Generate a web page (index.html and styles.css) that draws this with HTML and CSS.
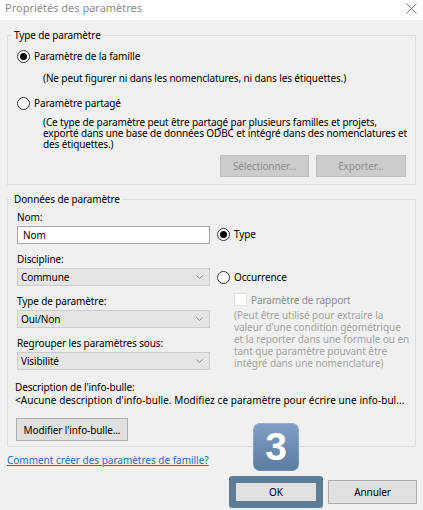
FILE: index.html
```html
<!DOCTYPE html>
<html lang="fr">
<head>
<meta charset="utf-8">
<title>Propriétés des paramètres</title>
<link rel="stylesheet" href="styles.css">
</head>
<body>
<div class="titlebar">
  <span class="title">Propriétés des paramètres</span>
  <svg class="close" width="11" height="11" viewBox="0 0 11 11"><path d="M0.5 0.5 L10.5 10.5 M10.5 0.5 L0.5 10.5" stroke="#7a7a7a" stroke-width="1" fill="none"/></svg>
</div>
<div class="content">
  <fieldset class="group g1">
    <legend>Type de paramètre</legend>
    <div class="radio-row r1"><span class="radio checked"></span><span>Paramètre de la famille</span></div>
    <p class="note n1">(Ne peut figurer ni dans les nomenclatures, ni dans les étiquettes.)</p>
    <div class="radio-row r2"><span class="radio"></span><span>Paramètre partagé</span></div>
    <p class="note n2">(Ce type de paramètre peut être partagé par plusieurs familles et projets,<br>exporté dans une base de données ODBC et intégré dans des nomenclatures et<br>des étiquettes.)</p>
    <div class="btn-row">
      <button class="btn disabled sel">Sélectionner...</button>
      <button class="btn disabled exp">Exporter...</button>
    </div>
  </fieldset>

  <fieldset class="group g2">
    <legend>Données de paramètre</legend>
    <div class="cols">
      <div class="left">
        <div class="lbl first">Nom:</div>
        <div class="input">Nom</div>
        <div class="lbl">Discipline:</div>
        <div class="select"><span>Commune</span><svg class="chev" width="7" height="4" viewBox="0 0 7 4"><path d="M0.5 0.5 L3.5 3.5 L6.5 0.5" stroke="#8a8a8a" fill="none"/></svg></div>
        <div class="lbl">Type de paramètre:</div>
        <div class="select"><span>Oui/Non</span><svg class="chev" width="7" height="4" viewBox="0 0 7 4"><path d="M0.5 0.5 L3.5 3.5 L6.5 0.5" stroke="#8a8a8a" fill="none"/></svg></div>
        <div class="lbl">Regrouper les paramètres sous:</div>
        <div class="select"><span>Visibilité</span><svg class="chev" width="7" height="4" viewBox="0 0 7 4"><path d="M0.5 0.5 L3.5 3.5 L6.5 0.5" stroke="#8a8a8a" fill="none"/></svg></div>
      </div>
      <div class="right">
        <div class="radio-row type"><span class="radio checked"></span><span>Type</span></div>
        <div class="radio-row occ"><span class="radio"></span><span>Occurrence</span></div>
        <div class="check-row"><span class="checkbox"></span><span>Paramètre de rapport</span></div>
        <p class="gray-note">(Peut être utilisé pour extraire la<br>valeur d'une condition géométrique<br>et la reporter dans une formule ou en<br>tant que paramètre pouvant être<br>intégré dans une nomenclature)</p>
      </div>
    </div>
    <div class="lbl desc-lbl">Description de l'info-bulle:</div>
    <div class="desc">&lt;Aucune description d'info-bulle. Modifiez ce paramètre pour écrire une info-bul...</div>
    <button class="btn modify">Modifier l'info-bulle...</button>
  </fieldset>

  <a class="link" href="#">Comment créer des paramètres de famille?</a>

  <div class="actions">
    <span class="focus-frame"><button class="btn ok">OK</button></span>
    <button class="btn cancel">Annuler</button>
  </div>
</div>
<div class="badge">3</div>
</body>
</html>
```
FILE: styles.css
```css
* { box-sizing: border-box; }
html, body { margin: 0; padding: 0; }
body {
  width: 423px;
  height: 510px;
  overflow: hidden;
  background: #f0f0f0;
  font-family: "Noto Sans", "DejaVu Sans", sans-serif;
  font-size: 10px;
  letter-spacing: -0.12px;
  color: #000;
  position: relative;
}
.titlebar {
  height: 20px;
  background: #fff;
  display: flex;
  justify-content: space-between;
  align-items: flex-start;
  padding: 0 6px 0 5px;
}
.title {
  font-size: 11px;
  letter-spacing: 0;
  line-height: 16px;
  color: #8c8c8c;
}
.close { margin-top: 3px; }

.content { display: flow-root; }

.group {
  margin: 0 7px;
  padding: 0 9px;
  border: 1px solid #dcdcdc;
  min-width: 0;
}
.group legend {
  padding: 0 2px;
  margin-left: -5px;
  line-height: 12px;
  font-size: 10px;
}
.g1 { margin-top: 9px; padding-bottom: 7px; }
.g2 { margin-top: 8px; padding-bottom: 5px; }

.radio-row {
  display: flex;
  align-items: center;
  gap: 4px;
  height: 13px;
  line-height: 13px;
}
.radio {
  width: 13px;
  height: 13px;
  border: 1px solid #333;
  border-radius: 50%;
  background: #fff;
  flex: none;
  display: flex;
  align-items: center;
  justify-content: center;
}
.radio.checked::after {
  content: "";
  width: 7px;
  height: 7px;
  border-radius: 50%;
  background: #000;
}
.r1 { margin-top: 9px; }
.note { margin: 0; padding-left: 26px; white-space: nowrap; }
.n1 { margin-top: 9px; line-height: 12px; }
.r2 { margin-top: 13px; }
.n2 { margin-top: 7px; line-height: 11px; }

.btn-row {
  display: flex;
  justify-content: flex-end;
  gap: 7px;
  margin-top: 5px;
}
.btn {
  font-family: inherit;
  font-size: 10px;
  letter-spacing: inherit;
  color: #000;
  background: #e1e1e1;
  border: 1px solid #adadad;
  padding: 0;
  margin: 0;
  border-radius: 0;
}
.btn.disabled {
  background: #cccccc;
  border-color: #bfbfbf;
  color: #8d8d8d;
  height: 22px;
}
.sel { width: 89px; }
.exp { width: 90px; }

.cols {
  display: grid;
  grid-template-columns: 193px 1fr;
  column-gap: 7px;
}
.left { display: flex; flex-direction: column; }
.lbl { line-height: 12px; margin-top: 9px; }
.lbl.first { margin-top: 6px; }
.input {
  margin-top: 3px;
  height: 18px;
  background: #fff;
  border: 1px solid #a8a8a8;
  line-height: 16px;
  padding-left: 5px;
}
.select {
  margin-top: 3px;
  height: 18px;
  background: #e5e5e5;
  border: 1px solid #cccccc;
  line-height: 16px;
  padding: 0 6px 0 3px;
  display: flex;
  align-items: center;
  justify-content: space-between;
}
.right { display: flex; flex-direction: column; }
.type { margin-top: 23px; }
.occ { margin-top: 30px; }
.check-row {
  margin-top: 9px;
  padding-left: 17px;
  display: flex;
  align-items: center;
  gap: 4px;
  height: 13px;
  color: #8d8d8d;
}
.checkbox {
  width: 13px;
  height: 13px;
  background: #fff;
  border: 1px solid #e2e2e2;
  flex: none;
}
.gray-note {
  margin: 3px 0 0 0;
  padding-left: 17px;
  line-height: 12px;
  color: #a3a3a3;
  white-space: nowrap;
  letter-spacing: -0.05px;
}
.desc-lbl { margin-top: 11px; line-height: 13px; margin-left: -2px; }
.desc {
  line-height: 13px;
  white-space: nowrap;
  margin-left: -2px;
  letter-spacing: 0.06px;
}
.modify {
  margin-top: 11px;
  height: 23px;
  width: 112px;
  margin-left: -1px;
}

.link {
  display: block;
  margin: 7px 0 0 7px;
  line-height: 12px;
  color: #1a6fd1;
  text-decoration: underline;
  width: max-content;
  letter-spacing: -0.02px;
}
.actions {
  display: flex;
  justify-content: flex-end;
  align-items: center;
  gap: 5px;
  margin-top: 10px;
  padding-right: 6px;
}
.focus-frame {
  display: block;
  padding: 7px;
  background: #5f7e95;
  border-radius: 3px;
}
.ok {
  display: block;
  width: 80px;
  height: 18px;
  background: #e1e1e1;
  border: none;
}
.cancel {
  width: 89px;
  height: 24px;
}
.badge {
  position: absolute;
  left: 253px;
  top: 423px;
  width: 46px;
  height: 48px;
  border-radius: 7px;
  background: linear-gradient(#7f9fc6, #5b7b9f);
  box-shadow: inset 0 0 0 1px rgba(255,255,255,0.15);
  color: #fff;
  font-family: "Liberation Sans", Arial, sans-serif;
  font-weight: bold;
  font-size: 39px;
  letter-spacing: 0;
  line-height: 48px;
  text-align: center;
}
```
